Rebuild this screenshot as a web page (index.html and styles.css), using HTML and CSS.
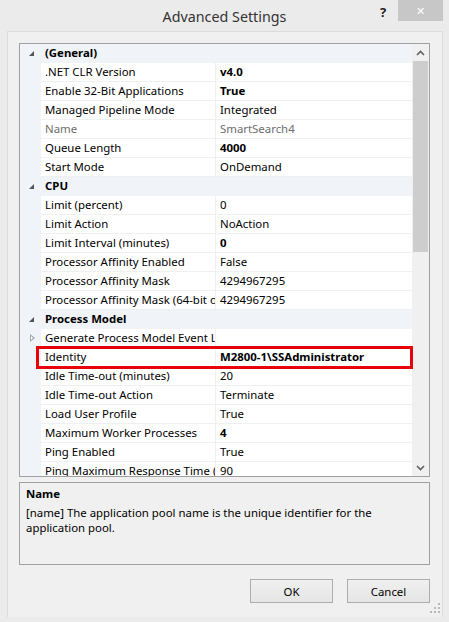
FILE: index.html
```html
<!DOCTYPE html>
<html lang="en">
<head>
    <meta charset="UTF-8">
    <meta name="viewport" content="width=device-width, initial-scale=1.0">
    <title>Advanced Settings</title>
    <link rel="stylesheet" href="styles.css">
</head>
<body>
    <section class="title-bar">
        <h1 class="title">Advanced Settings</h1>
        <span class="help">?</span>
        <span class="close">&#x2715;</span>
    </section>

    <section class="panel">
        <div class="grid">
            <div class="rows">
                <div class="row cat"><span class="exp"></span><span class="name">(General)</span></div>
                <div class="row"><span></span><span class="name">.NET CLR Version</span><span class="val bold">v4.0</span></div>
                <div class="row"><span></span><span class="name">Enable 32-Bit Applications</span><span class="val bold">True</span></div>
                <div class="row"><span></span><span class="name">Managed Pipeline Mode</span><span class="val">Integrated</span></div>
                <div class="row dim"><span></span><span class="name">Name</span><span class="val">SmartSearch4</span></div>
                <div class="row"><span></span><span class="name">Queue Length</span><span class="val bold">4000</span></div>
                <div class="row"><span></span><span class="name">Start Mode</span><span class="val">OnDemand</span></div>

                <div class="row cat"><span class="exp"></span><span class="name">CPU</span></div>
                <div class="row"><span></span><span class="name">Limit (percent)</span><span class="val">0</span></div>
                <div class="row"><span></span><span class="name">Limit Action</span><span class="val">NoAction</span></div>
                <div class="row"><span></span><span class="name">Limit Interval (minutes)</span><span class="val bold">0</span></div>
                <div class="row"><span></span><span class="name">Processor Affinity Enabled</span><span class="val">False</span></div>
                <div class="row"><span></span><span class="name">Processor Affinity Mask</span><span class="val">4294967295</span></div>
                <div class="row"><span></span><span class="name">Processor Affinity Mask (64-bit option)</span><span class="val">4294967295</span></div>

                <div class="row cat"><span class="exp"></span><span class="name">Process Model</span></div>
                <div class="row"><span class="col"></span><span class="name">Generate Process Model Event Log Entry</span><span class="val"></span></div>
                <div class="row selected">
                    <span></span><span class="name">Identity</span><span class="val bold">M2800-1\SSAdministrator</span>
                    <span class="mark"></span>
                </div>
                <div class="row"><span></span><span class="name">Idle Time-out (minutes)</span><span class="val">20</span></div>
                <div class="row"><span></span><span class="name">Idle Time-out Action</span><span class="val">Terminate</span></div>
                <div class="row"><span></span><span class="name">Load User Profile</span><span class="val">True</span></div>
                <div class="row"><span></span><span class="name">Maximum Worker Processes</span><span class="val bold">4</span></div>
                <div class="row"><span></span><span class="name">Ping Enabled</span><span class="val">True</span></div>
                <div class="row"><span></span><span class="name">Ping Maximum Response Time (seconds)</span><span class="val">90</span></div>
            </div>
            <div class="scrollbar">
                <span class="arrow">
                    <svg width="9" height="6" viewBox="0 0 9 6"><path d="M1 5 L4.5 1.5 L8 5" fill="none" stroke="#606060" stroke-width="1.6"/></svg>
                </span>
                <span class="thumb"></span>
                <span class="track"></span>
                <span class="arrow">
                    <svg width="9" height="6" viewBox="0 0 9 6"><path d="M1 1 L4.5 4.5 L8 1" fill="none" stroke="#606060" stroke-width="1.6"/></svg>
                </span>
            </div>
        </div>

        <div class="description">
            <h4>Name</h4>
            <p>[name] The application pool name is the unique identifier for the application pool.</p>
        </div>

        <div class="buttons">
            <a href="#" class="btn">OK</a>
            <a href="#" class="btn">Cancel</a>
        </div>

        <svg class="grip" width="10" height="10" viewBox="0 0 10 10">
            <rect x="8" y="0" width="2" height="2" fill="#b8b8b8"/>
            <rect x="4" y="4" width="2" height="2" fill="#b8b8b8"/>
            <rect x="8" y="4" width="2" height="2" fill="#b8b8b8"/>
            <rect x="0" y="8" width="2" height="2" fill="#b8b8b8"/>
            <rect x="4" y="8" width="2" height="2" fill="#b8b8b8"/>
            <rect x="8" y="8" width="2" height="2" fill="#b8b8b8"/>
        </svg>
    </section>
</body>
</html>
```

FILE: styles.css
```css
* {
    margin: 0;
    padding: 0;
    box-sizing: border-box;
    font-family: 'Noto Sans', 'Open Sans', sans-serif;
}

a {
    text-decoration: none;
    color: #000;
}

body {
    background-color: #ebebeb;
    width: 449px;
    height: 622px;
    overflow: hidden;
}


/* title bar */

.title-bar {
    position: relative;
    height: 31px;
    display: flex;
    justify-content: center;
    align-items: center;
}

.title {
    font-size: 14.3px;
    font-weight: normal;
    color: #333;
    margin-top: 1px;
}

.help {
    position: absolute;
    left: 380px;
    top: 3px;
    font-size: 13px;
    font-weight: bold;
    color: #222;
}

.close {
    position: absolute;
    right: 6px;
    top: 0;
    width: 45px;
    height: 21px;
    background-color: #c7c7c7;
    color: #fff;
    font-size: 11px;
    display: flex;
    justify-content: center;
    align-items: center;
}


/* panel */

.panel {
    position: relative;
    margin: 0 6px 0 7px;
    height: 586px;
    background-color: #f0f0f0;
    border: 1px solid #dcdcdc;
    border-bottom: none;
    padding: 11px 12px 0 11px;
}

.grid {
    display: flex;
    height: 434px;
    border: 1px solid #a0a0a0;
    background-color: #fff;
    overflow: hidden;
}

.rows {
    width: 392px;
    background-color: #f0f3f8;
}

.row {
    display: grid;
    grid-template-columns: 21px 175px 196px;
    height: 19px;
    font-size: 11.4px;
    line-height: 18px;
    color: #000;
}

.row .name,
.row .val {
    background-color: #fff;
    border-bottom: 1px solid #eef0f3;
    white-space: nowrap;
    overflow: hidden;
    padding-left: 4px;
}

.row .name {
    border-right: 1px solid #eef0f3;
}

.row.cat .name {
    background-color: transparent;
    border: none;
    font-weight: bold;
    grid-column: 2 / 4;
}

.bold {
    font-weight: bold;
}

.dim {
    color: #6d6d6d;
}

.exp,
.col {
    position: relative;
}

.exp::after {
    content: '';
    position: absolute;
    left: 9px;
    top: 7px;
    border-style: solid;
    border-width: 0 0 5px 5px;
    border-color: transparent transparent #555 transparent;
}

.col::after {
    content: '';
    position: absolute;
    left: 10px;
    top: 5px;
    width: 0;
    height: 0;
    border-style: solid;
    border-width: 4px 0 4px 5px;
    border-color: transparent transparent transparent #a6a6a6;
}

.col::before {
    content: '';
    position: absolute;
    left: 11px;
    top: 7px;
    border-style: solid;
    border-width: 2px 0 2px 2px;
    border-color: transparent transparent transparent #fff;
    z-index: 1;
}

/* red box drawn over the selected row */
.selected {
    position: relative;
}

.mark {
    position: absolute;
    left: 16px;
    top: -2px;
    width: 377px;
    height: 23px;
    border: 3px solid #e8000b;
    z-index: 2;
}

.scrollbar {
    width: 17px;
    background-color: #f0f0f0;
    display: flex;
    flex-direction: column;
}

.arrow {
    height: 17px;
    display: flex;
    justify-content: center;
    align-items: center;
}

.thumb {
    height: 191px;
    margin: 0 1px;
    background-color: #cdcdcd;
}

.track {
    flex: 1;
}


/* description */

.description {
    margin-top: 5px;
    height: 83px;
    border: 1px solid #a0a0a0;
    padding: 3px 6px;
    font-size: 11.4px;
    color: #000;
}

.description h4 {
    font-size: 11.4px;
    line-height: 16px;
}

.description p {
    width: 360px;
    line-height: 15px;
    margin-top: 3px;
}


/* buttons */

.buttons {
    display: flex;
    justify-content: flex-end;
    margin-top: 14px;
    gap: 14px;
}

.btn {
    display: flex;
    justify-content: center;
    align-items: center;
    width: 83px;
    height: 24px;
    border: 1px solid #adadad;
    background: linear-gradient(#f0f0f0, #e5e5e5);
    font-size: 11.4px;
}

.grip {
    position: absolute;
    right: 2px;
    bottom: 4px;
}
```
